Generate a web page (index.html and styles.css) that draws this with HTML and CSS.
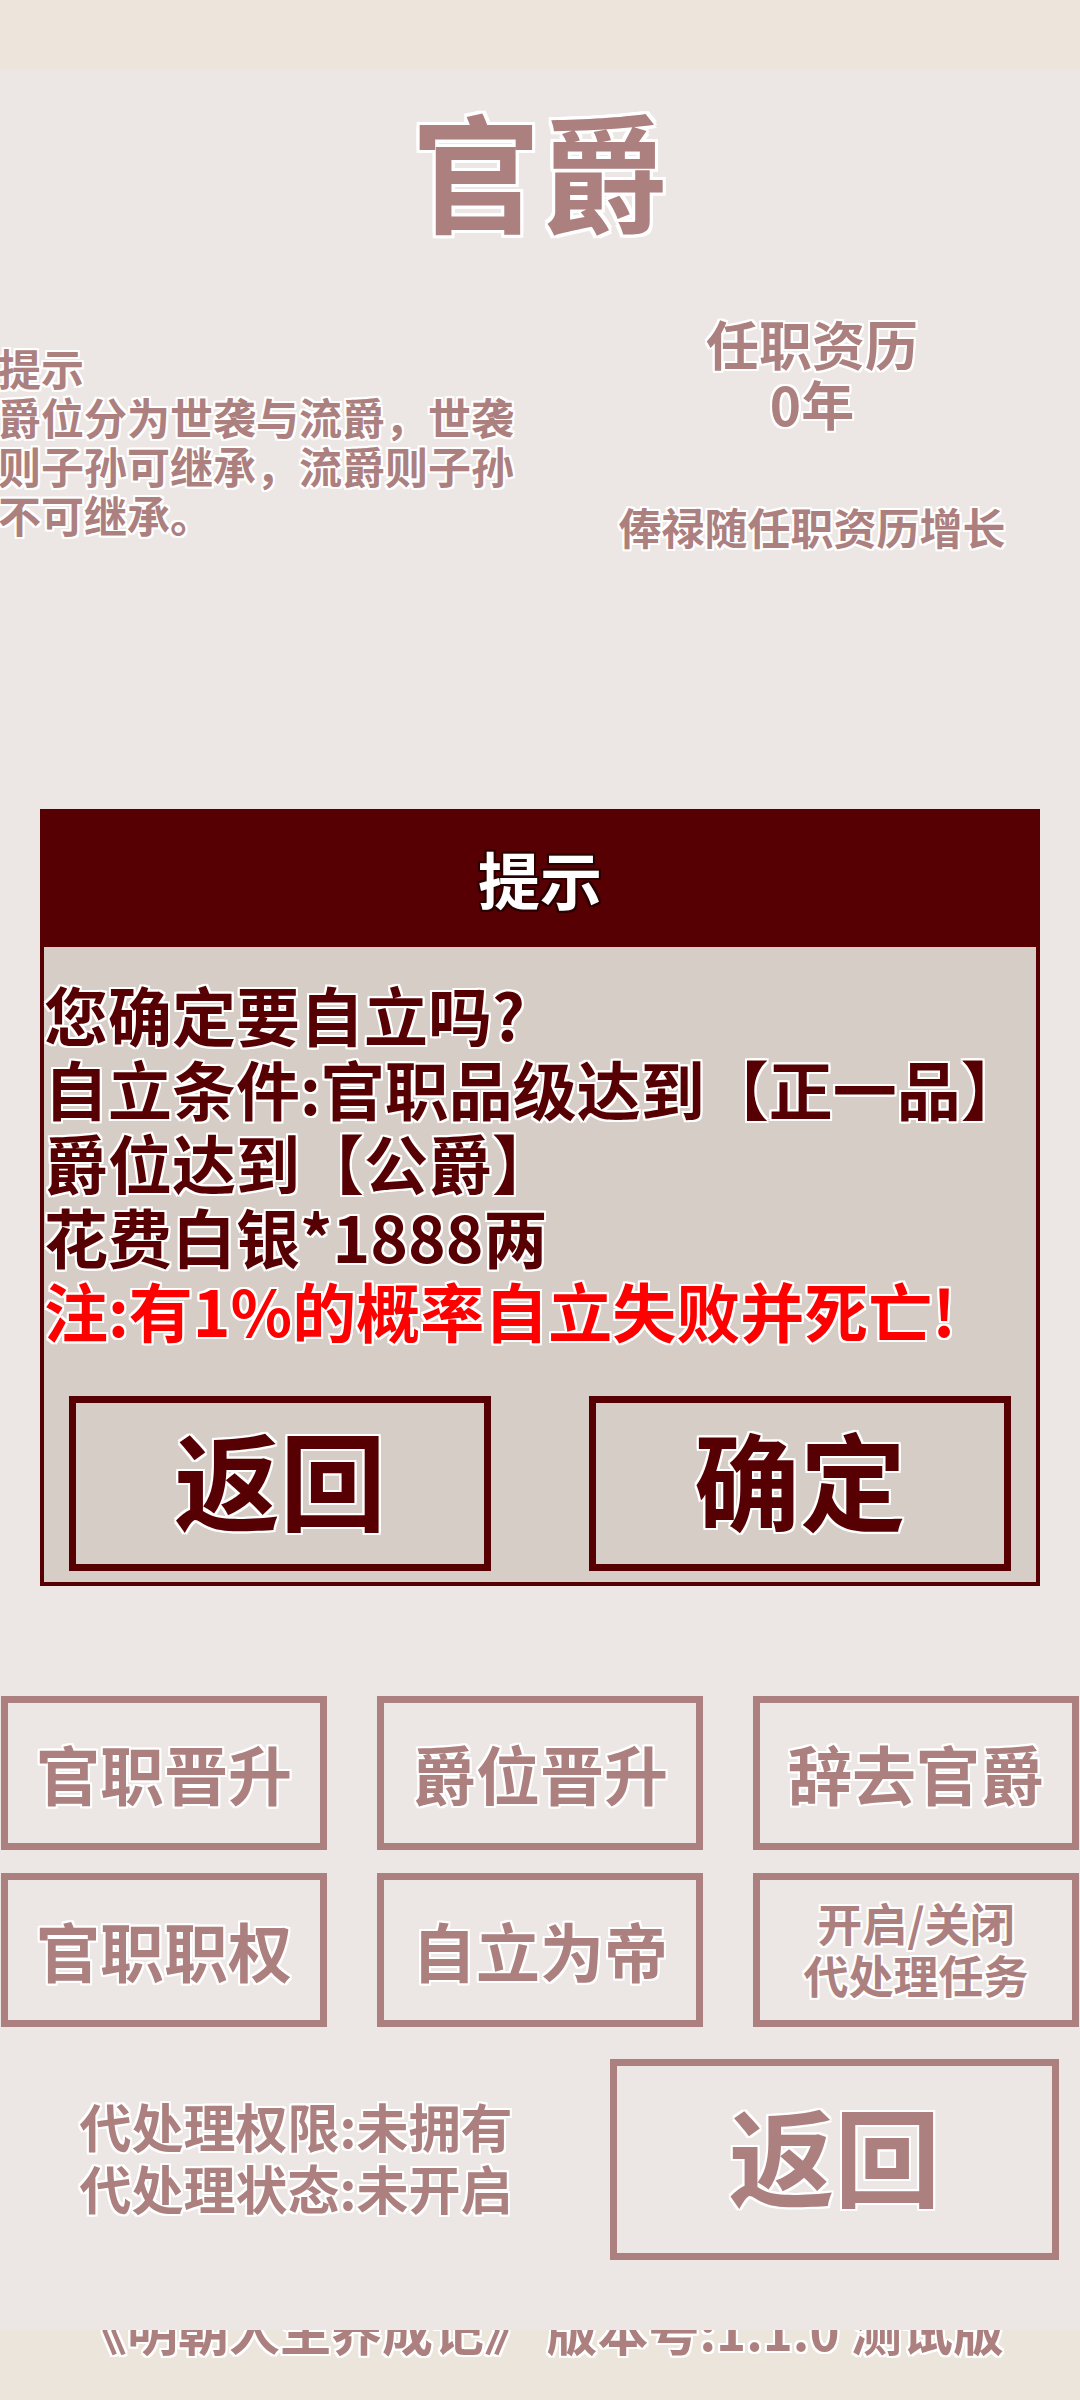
FILE: index.html
```html
<!DOCTYPE html>
<html lang="zh-CN">

<head>
    <meta charset="UTF-8">
    <meta name="viewport" content="width=device-width, initial-scale=1.0">
    <title>官爵</title>
    <link rel="stylesheet" href="styles.css">
</head>

<body>
    <div class="topbar"></div>
    <div class="main">
        <h1 class="title">官爵</h1>
        <div class="info">
            <div class="hint">提示<br>爵位分为世袭与流爵，世袭<br>则子孙可继承，流爵则子孙<br>不可继承。</div>
            <div class="tenure">
                <div class="tenure-years">任职资历<br>0年</div>
                <div class="tenure-note">俸禄随任职资历增长</div>
            </div>
        </div>
        <!-- 自立确认框 -->
        <div class="dialog">
            <div class="dialog-head">提示</div>
            <div class="dialog-body">
                <div class="dialog-text">
                    您确定要自立吗?<br>
                    自立条件:官职品级达到【正一品】<br>
                    爵位达到【公爵】<br>
                    花费白银*1888两<br>
                    <span class="warn">注:有1%的概率自立失败并死亡!</span>
                </div>
                <div class="dialog-btns">
                    <a href="javascript:void(0)" class="dialog-btn">返回</a>
                    <a href="javascript:void(0)" class="dialog-btn">确定</a>
                </div>
            </div>
        </div>
        <div class="menu">
            <a href="javascript:void(0)" class="menu-item">官职晋升</a>
            <a href="javascript:void(0)" class="menu-item">爵位晋升</a>
            <a href="javascript:void(0)" class="menu-item">辞去官爵</a>
            <a href="javascript:void(0)" class="menu-item">官职职权</a>
            <a href="javascript:void(0)" class="menu-item">自立为帝</a>
            <a href="javascript:void(0)" class="menu-item small">开启/关闭<br>代处理任务</a>
        </div>
        <div class="bottom">
            <div class="status">代处理权限:未拥有<br>代处理状态:未开启</div>
            <a href="javascript:void(0)" class="back">返回</a>
        </div>
    </div>
    <div class="footer">
        <p>《明朝人生养成记》 版本号:1.1.0 测试版</p>
    </div>
</body>

</html>
```

FILE: styles.css
```css
* {
    padding: 0;
    margin: 0;
}

body {
    width: 1080px;
    height: 2400px;
    overflow: hidden;
    background-color: #ece5dc;
    font-family: "Noto Sans CJK SC", "Noto Sans", sans-serif;
    font-weight: bold;
    color: #ad8080;
}

a {
    text-decoration: none;
    color: inherit;
}

.topbar {
    height: 70px;
    background-color: #ede5dc;
}

.main {
    height: 2260px;
    background-color: #ece7e4;
    /* 白色描边 */
    text-shadow: 2px 0 #fff, -2px 0 #fff, 0 2px #fff, 0 -2px #fff,
        2px 2px #fff, -2px -2px #fff, 2px -2px #fff, -2px 2px #fff;
}

.title {
    padding-top: 32px;
    font-size: 128px;
    line-height: 134px;
    text-align: center;
    text-shadow: 3px 0 #fff, -3px 0 #fff, 0 3px #fff, 0 -3px #fff,
        3px 3px #fff, -3px -3px #fff, 3px -3px #fff, -3px 3px #fff;
}

.info {
    display: flex;
    align-items: flex-start;
}

.hint {
    width: 540px;
    margin-top: 107px;
    margin-left: -2px;
    font-size: 43px;
    line-height: 49px;
}

.tenure {
    width: 532px;
    margin-top: 77px;
    padding-left: 8px;
    text-align: center;
}

.tenure-years {
    font-size: 53px;
    line-height: 60px;
}

.tenure-note {
    margin-top: 68px;
    font-size: 43px;
    line-height: 50px;
}

.dialog {
    width: 1000px;
    margin: 258px 40px 0;
    color: #560003;
}

.dialog-head {
    display: flex;
    align-items: center;
    justify-content: center;
    height: 138px;
    background-color: #560003;
    color: #fff;
    font-size: 62px;
    text-shadow: 2px 0 #2a0000, -2px 0 #2a0000, 0 2px #2a0000, 0 -2px #2a0000,
        2px 2px #2a0000, -2px -2px #2a0000, 2px -2px #2a0000, -2px 2px #2a0000;
}

.dialog-body {
    padding: 29px 0 11px;
    border: 4px solid #560003;
    border-top: none;
    background-color: #d6cdc7;
}

.dialog-text {
    font-size: 64px;
    line-height: 74px;
}

.warn {
    color: #ff0000;
}

.dialog-btns {
    display: flex;
    justify-content: space-between;
    margin-top: 50px;
    padding: 0 25px;
}

.dialog-btn {
    display: flex;
    align-items: center;
    justify-content: center;
    width: 422px;
    height: 175px;
    box-sizing: border-box;
    padding-bottom: 14px;
    border: 7px solid #560003;
    font-size: 106px;
}

.menu {
    display: grid;
    grid-template-columns: repeat(3, 326px);
    grid-auto-rows: 154px;
    column-gap: 50px;
    row-gap: 23px;
    margin-top: 110px;
    padding-left: 1px;
}

.menu-item {
    display: flex;
    align-items: center;
    justify-content: center;
    box-sizing: border-box;
    padding-bottom: 2px;
    border: 7px solid #ad8080;
    font-size: 64px;
    text-align: center;
}

.menu-item.small {
    font-size: 45px;
    line-height: 52px;
}

.bottom {
    display: flex;
    align-items: center;
    margin-top: 32px;
    padding-right: 21px;
}

.status {
    flex: 1;
    padding-right: 18px;
    padding-bottom: 6px;
    font-size: 52px;
    line-height: 62px;
    text-align: center;
}

.back {
    display: flex;
    align-items: center;
    justify-content: center;
    width: 449px;
    height: 201px;
    box-sizing: border-box;
    padding-bottom: 14px;
    border: 7px solid #ad8080;
    font-size: 106px;
}

/* 版本号被上层遮住一半 */
.footer {
    height: 70px;
    overflow: hidden;
}

.footer p {
    margin-top: -26px;
    font-size: 51px;
    line-height: 51px;
    text-align: center;
    text-shadow: 2px 0 #fff, -2px 0 #fff, 0 2px #fff, 0 -2px #fff,
        2px 2px #fff, -2px -2px #fff, 2px -2px #fff, -2px 2px #fff;
}
```
